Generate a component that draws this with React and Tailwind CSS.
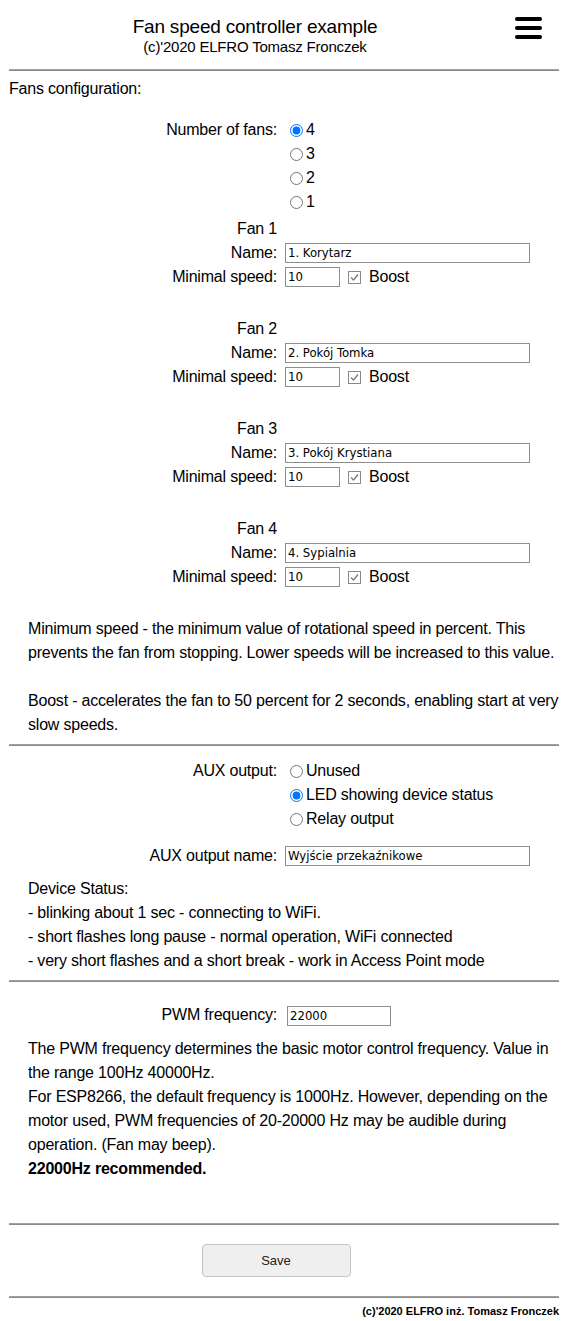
import React from 'react';

const fans = [
  { n: 1, name: '1. Korytarz' },
  { n: 2, name: '2. Pokój Tomka' },
  { n: 3, name: '3. Pokój Krystiana' },
  { n: 4, name: '4. Sypialnia' },
];

function Hr({ className = '' }) {
  return <div className={`h-[2px] bg-[#8c8c8c] border-t border-[#a0a0a0] ${className}`} />;
}

function Row({ label, children, className = '' }) {
  return (
    <div className={`flex h-6 items-center ${className}`}>
      <div className="w-[276px] shrink-0 pr-2 text-right">{label}</div>
      <div className="flex items-center">{children}</div>
    </div>
  );
}

function TextInput({ value, width }) {
  return (
    <input
      type="text"
      defaultValue={value}
      className={`${width} h-5 border border-[#8f8f8f] bg-white px-[2px] text-[13px] tracking-normal text-black font-['DejaVu_Sans_Condensed','Liberation_Sans',sans-serif] outline-none`}
    />
  );
}

function Radio({ label, checked, name }) {
  return (
    <label className="flex h-6 items-center">
      <input type="radio" name={name} defaultChecked={checked} className="ml-[5px] mr-[3px] mt-0 h-[13px] w-[13px]" />
      {label}
    </label>
  );
}

function Check() {
  return (
    <span className="ml-2 mr-2 inline-flex h-[13px] w-[13px] items-center justify-center border border-[#8a8a8a] bg-white">
      <svg width="11" height="11" viewBox="0 0 11 11">
        <path d="M2 5.5 L4.5 8 L9 2.5" fill="none" stroke="#7a7a7a" strokeWidth="1.3" />
      </svg>
    </span>
  );
}

export default function App() {
  return (
    <div className="w-[571px] bg-white pb-2 text-[16px] leading-6 tracking-[-0.2px] text-black font-['Liberation_Sans',sans-serif]">
      <header className="flex h-[69px]">
        <div className="flex-1 pt-[16px] text-center">
          <div className="text-[19px] leading-[22px]">Fan speed controller example</div>
          <div className="text-[15px] leading-[18px]">(c)'2020 ELFRO Tomasz Fronczek</div>
        </div>
        <div className="flex w-[61px] flex-col gap-[5px] pl-[5px] pt-[17px]">
          <span className="h-[4px] w-[27px] rounded-full bg-black" />
          <span className="h-[4px] w-[27px] rounded-full bg-black" />
          <span className="h-[4px] w-[27px] rounded-full bg-black" />
        </div>
      </header>

      <div className="pl-[9px] pr-[12px]">
        <Hr />
        <div className="mt-[6px]">Fans configuration:</div>

        <Row label="Number of fans:" className="mt-[17px]">
          <Radio name="fans" label="4" checked />
        </Row>
        <Row label="">
          <Radio name="fans" label="3" />
        </Row>
        <Row label="">
          <Radio name="fans" label="2" />
        </Row>
        <Row label="">
          <Radio name="fans" label="1" />
        </Row>

        {fans.map((f, i) => (
          <div key={f.n} className={i === 0 ? 'mt-[3px]' : 'mt-[28px]'}>
            <Row label={`Fan ${f.n}`} />
            <Row label="Name:">
              <TextInput value={f.name} width="w-[245px]" />
            </Row>
            <Row label="Minimal speed:">
              <TextInput value="10" width="w-[55px]" />
              <Check />
              Boost
            </Row>
          </div>
        ))}

        <div className="mt-[28px] pl-[19px]">
          <p>Minimum speed - the minimum value of rotational speed in percent. This prevents the fan from stopping. Lower speeds will be increased to this value.</p>
          <p className="mt-6">Boost - accelerates the fan to 50 percent for 2 seconds, enabling start at very slow speeds.</p>
        </div>

        <Hr className="mt-[7px]" />

        <Row label="AUX output:" className="mt-[13px]">
          <Radio name="aux" label="Unused" />
        </Row>
        <Row label="">
          <Radio name="aux" label="LED showing device status" checked />
        </Row>
        <Row label="">
          <Radio name="aux" label="Relay output" />
        </Row>
        <Row label="AUX output name:" className="mt-[13px]">
          <TextInput value="Wyjście przekaźnikowe" width="w-[245px]" />
        </Row>

        <div className="mt-[9px] pl-[19px]">
          <div>Device Status:</div>
          <div>- blinking about 1 sec - connecting to WiFi.</div>
          <div>- short flashes long pause - normal operation, WiFi connected</div>
          <div>- very short flashes and a short break - work in Access Point mode</div>
        </div>

        <Hr className="mt-[7px]" />

        <Row label="PWM frequency:" className="mt-[21px]">
          <span className="ml-[2px]">
            <TextInput value="22000" width="w-[104px]" />
          </span>
        </Row>

        <div className="mt-[10px] pl-[19px]">
          <div>The PWM frequency determines the basic motor control frequency. Value in the range 100Hz 40000Hz.</div>
          <div>For ESP8266, the default frequency is 1000Hz. However, depending on the motor used, PWM frequencies of 20-20000 Hz may be audible during operation. (Fan may beep).</div>
          <div className="font-bold">22000Hz recommended.</div>
        </div>

        <Hr className="mt-[42px]" />

        <div className="flex justify-center pt-[19px] pb-[19px]">
          <button className="ml-[-16px] h-[33px] w-[149px] rounded-[4px] border border-[#c4c4c4] bg-[#efefef] text-[13px] tracking-normal text-[#222] font-['Liberation_Sans',sans-serif]">
            Save
          </button>
        </div>

        <Hr />
        <div className="mt-[5px] text-right text-[11px] leading-4 tracking-normal font-bold">(c)'2020 ELFRO inż. Tomasz Fronczek</div>
      </div>
    </div>
  );
}
